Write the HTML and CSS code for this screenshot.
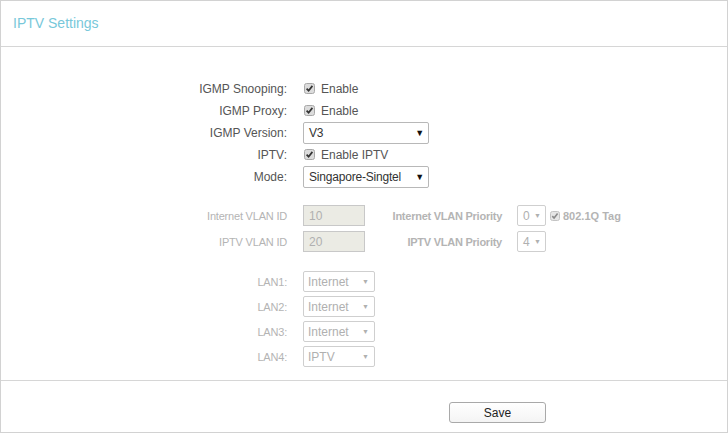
FILE: index.html
```html
<!DOCTYPE html>
<html>
<head>
<meta charset="utf-8">
<link rel="stylesheet" href="styles.css">
</head>
<body>
<div class="panel">
  <div class="head"><h1>IPTV Settings</h1></div>
  <div class="form">
    <div class="row">
      <div class="lbl">IGMP Snooping:</div>
      <div class="ctl"><span class="cb"><svg width="11" height="11" viewBox="0 0 11 11"><rect x="0.5" y="0.5" width="10" height="10" rx="2" fill="#dcdcdc" stroke="#a8a8a8"/><path d="M2.6 5.6 L4.6 7.7 L8.4 2.9" fill="none" stroke="#333" stroke-width="1.7"/></svg></span><span class="opt">Enable</span></div>
    </div>
    <div class="row">
      <div class="lbl">IGMP Proxy:</div>
      <div class="ctl"><span class="cb"><svg width="11" height="11" viewBox="0 0 11 11"><rect x="0.5" y="0.5" width="10" height="10" rx="2" fill="#dcdcdc" stroke="#a8a8a8"/><path d="M2.6 5.6 L4.6 7.7 L8.4 2.9" fill="none" stroke="#333" stroke-width="1.7"/></svg></span><span class="opt">Enable</span></div>
    </div>
    <div class="row">
      <div class="lbl">IGMP Version:</div>
      <div class="ctl"><div class="sel big"><span>V3</span><span class="arr">▼</span></div></div>
    </div>
    <div class="row">
      <div class="lbl">IPTV:</div>
      <div class="ctl"><span class="cb"><svg width="11" height="11" viewBox="0 0 11 11"><rect x="0.5" y="0.5" width="10" height="10" rx="2" fill="#dcdcdc" stroke="#a8a8a8"/><path d="M2.6 5.6 L4.6 7.7 L8.4 2.9" fill="none" stroke="#333" stroke-width="1.7"/></svg></span><span class="opt">Enable IPTV</span></div>
    </div>
    <div class="row">
      <div class="lbl">Mode:</div>
      <div class="ctl"><div class="sel big"><span>Singapore-Singtel</span><span class="arr">▼</span></div></div>
    </div>

    <div class="row dis vlan1">
      <div class="lbl">Internet VLAN ID</div>
      <div class="ctl">
        <div class="inp">10</div>
        <div class="plbl">Internet VLAN Priority</div>
        <div class="sel tiny"><span>0</span><span class="arr">▼</span></div>
        <span class="cb cb2"><svg width="10" height="10" viewBox="0 0 10 10"><rect x="0.5" y="0.5" width="9" height="9" rx="2" fill="#e6e6e6" stroke="#c4c4c4"/><path d="M2.3 5.1 L4.1 7 L7.6 2.6" fill="none" stroke="#8a8a8a" stroke-width="1.6"/></svg></span>
        <span class="tag">802.1Q Tag</span>
      </div>
    </div>
    <div class="row dis vlan2">
      <div class="lbl">IPTV VLAN ID</div>
      <div class="ctl">
        <div class="inp">20</div>
        <div class="plbl">IPTV VLAN Priority</div>
        <div class="sel tiny"><span>4</span><span class="arr">▼</span></div>
      </div>
    </div>

    <div class="row dis lan first">
      <div class="lbl">LAN1:</div>
      <div class="ctl"><div class="sel small"><span>Internet</span><span class="arr">▼</span></div></div>
    </div>
    <div class="row dis lan">
      <div class="lbl">LAN2:</div>
      <div class="ctl"><div class="sel small"><span>Internet</span><span class="arr">▼</span></div></div>
    </div>
    <div class="row dis lan">
      <div class="lbl">LAN3:</div>
      <div class="ctl"><div class="sel small"><span>Internet</span><span class="arr">▼</span></div></div>
    </div>
    <div class="row dis lan">
      <div class="lbl">LAN4:</div>
      <div class="ctl"><div class="sel small"><span>IPTV</span><span class="arr">▼</span></div></div>
    </div>
  </div>
  <div class="foot">
    <button class="save">Save</button>
  </div>
</div>
</body>
</html>
```
FILE: styles.css
```css
* { box-sizing: border-box; }
html, body { margin: 0; padding: 0; background: #fff; }
body { font-family: "Liberation Sans", Arial, sans-serif; font-size: 12px; color: #555; }

.panel {
  width: 728px;
  height: 433px;
  border: 1px solid #d2d2d2;
  display: flex;
  flex-direction: column;
}
.head {
  height: 46px;
  border-bottom: 1px solid #d6d6d6;
  padding: 13px 0 0 12px;
}
.head h1 {
  margin: 0;
  font-size: 14px;
  font-weight: normal;
  color: #78c8da;
  line-height: 18px;
}
.form {
  height: 334px;
  border-bottom: 1px solid #d6d6d6;
  padding-top: 31px;
  display: flex;
  flex-direction: column;
  gap: 1px;
}
.row {
  display: flex;
  align-items: center;
  height: 21px;
  white-space: nowrap;
}
.lbl {
  width: 286px;
  text-align: right;
  color: #555;
}
.ctl {
  margin-left: 16px;
  display: flex;
  align-items: center;
}
.cb { display: inline-flex; width: 11px; height: 11px; margin-left: 1px; }
.cb svg { display: block; }
.opt { margin-left: 6px; color: #555; }

.sel {
  display: flex;
  align-items: center;
  justify-content: space-between;
  border: 1px solid #b8b8b8;
  border-radius: 2px;
  background: #fff;
  color: #333;
  font-size: 12px;
}
.sel.big { width: 126px; height: 22px; padding: 0 4px 0 5px; letter-spacing: -0.2px; }
.sel.big .arr { font-size: 9px; color: #111; }

.vlan1 { margin-top: 17px; }
.vlan2 { margin-top: 4px; }
.dis .lbl { color: #b4b4b4; font-size: 11px; letter-spacing: -0.2px; }
.inp {
  width: 62px;
  height: 21px;
  border: 1px solid #c8c8c8;
  background: #ebebe4;
  color: #b0b0b0;
  padding: 3px 0 0 5px;
  font-size: 12px;
}
.plbl {
  width: 137px;
  text-align: right;
  font-weight: bold;
  font-size: 11px;
  letter-spacing: -0.25px;
  color: #b4b4b4;
}
.sel.tiny {
  margin-left: 15px;
  width: 29px;
  height: 21px;
  padding: 0 4px 0 5px;
  border-color: #cfcfcf;
  color: #b0b0b0;
  font-size: 12px;
}
.sel .arr { font-size: 7px; color: #b0b0b0; }
.cb2 { margin-left: 4px; width: 10px; height: 10px; }
.tag { margin-left: 3px; font-weight: bold; font-size: 11px; color: #b4b4b4; }

.lan { margin-top: 3px; }
.lan.first { margin-top: 18px; }
.sel.small {
  width: 72px;
  height: 21px;
  padding: 0 5px 0 4px;
  border-color: #cfcfcf;
  color: #b0b0b0;
  font-size: 12px;
}

.foot {
  flex: 1;
  display: flex;
  align-items: flex-start;
  padding: 21px 0 0 448px;
}
.save {
  width: 97px;
  height: 21px;
  border: 1px solid #a9a9a9;
  border-radius: 3px;
  background: linear-gradient(#fff, #f4f4f4);
  font-family: "Liberation Sans", Arial, sans-serif;
  font-size: 12px;
  color: #222;
  padding: 0;
}
```
